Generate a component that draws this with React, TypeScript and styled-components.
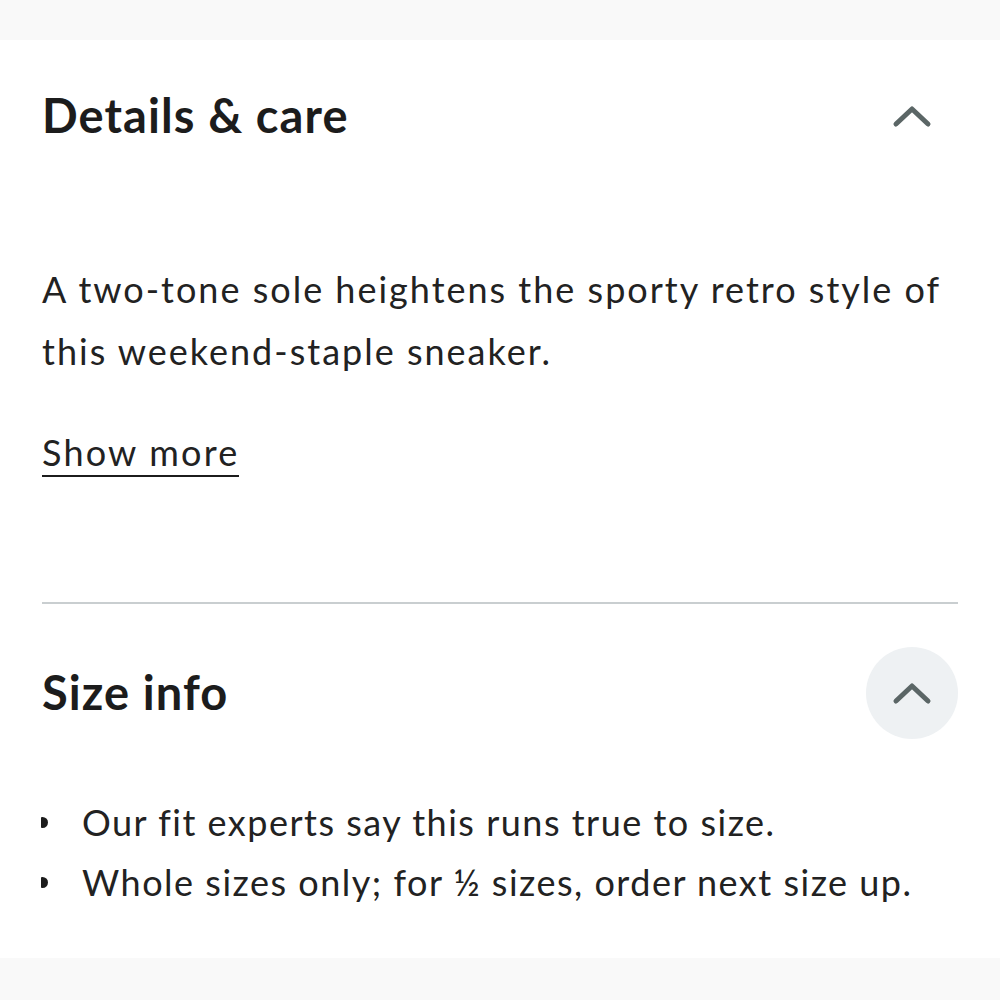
import React from "react";
import styled, { createGlobalStyle } from "styled-components";

const Global = createGlobalStyle`
  html, body { margin: 0; padding: 0; background: #ffffff; }
  body { font-family: Lato, "Noto Sans", sans-serif; color: #1f1f1f; }
`;

const Page = styled.div`
  width: 1000px;
  height: 1000px;
  display: flex;
  flex-direction: column;
  background: #ffffff;
  overflow: hidden;
`;

const Band = styled.div<{ $h: number }>`
  height: ${(p) => p.$h}px;
  background: #f9f9f9;
  flex-shrink: 0;
`;

const Content = styled.div`
  flex: 1;
  padding: 0 42px;
  display: flex;
  flex-direction: column;
`;

const Section = styled.section<{ $top: number; $bottom: number }>`
  padding-top: ${(p) => p.$top}px;
  padding-bottom: ${(p) => p.$bottom}px;
`;

const Header = styled.div`
  display: flex;
  align-items: center;
  justify-content: space-between;
  height: 92px;
`;

const Title = styled.h2`
  margin: 0 0 3px;
  font-size: 47px;
  font-weight: 700;
  letter-spacing: 1.1px;
  color: #1c1c1c;
`;

const Toggle = styled.button<{ $filled?: boolean }>`
  width: 92px;
  height: 92px;
  border-radius: 50%;
  border: none;
  padding: 0;
  display: flex;
  align-items: center;
  justify-content: center;
  background: ${(p) => (p.$filled ? "#eef1f3" : "transparent")};
`;

const Body = styled.p`
  margin: 96px 0 0;
  font-size: 36px;
  line-height: 62px;
  letter-spacing: 2px;
  color: #222;
`;

const ShowMore = styled.a`
  display: inline-block;
  margin-top: 47px;
  font-size: 36px;
  line-height: 46px;
  letter-spacing: 2.2px;
  color: #222;
  text-decoration: none;
  border-bottom: 2.5px solid #1c1c1c;
`;

const Divider = styled.hr`
  margin: 0;
  border: none;
  height: 2px;
  background: #c9ced0;
`;

const List = styled.ul`
  list-style: none;
  margin: 53px 0 0;
  padding: 0;
`;

const Item = styled.li`
  display: flex;
  align-items: center;
  gap: 34px;
  font-size: 36px;
  line-height: 60px;
  letter-spacing: 1.5px;
  color: #222;
`;

const Dot = styled.span`
  width: 7px;
  height: 11px;
  margin-left: -1px;
  background: #1c1c1c;
  border-radius: 1px 6px 6px 1px;
  flex-shrink: 0;
`;

const Chevron = () => (
  <svg width="40" height="24" viewBox="0 0 40 24">
    <path
      d="M4 20 L20 5 L36 20"
      fill="none"
      stroke="#5b6666"
      strokeWidth="5"
      strokeLinecap="round"
      strokeLinejoin="round"
    />
  </svg>
);

export default function App() {
  return (
    <Page>
      <Global />
      <Band $h={40} />
      <Content>
        <Section $top={30} $bottom={125}>
          <Header>
            <Title>Details &amp; care</Title>
            <Toggle aria-label="Collapse details">
              <Chevron />
            </Toggle>
          </Header>
          <Body>
            A two-tone sole heightens the sporty retro style of this weekend-staple sneaker.
          </Body>
          <ShowMore href="#">Show more</ShowMore>
        </Section>
        <Divider />
        <Section $top={43} $bottom={0}>
          <Header>
            <Title>Size info</Title>
            <Toggle $filled aria-label="Collapse size info">
              <Chevron />
            </Toggle>
          </Header>
          <List>
            <Item>
              <Dot />
              Our fit experts say this runs true to size.
            </Item>
            <Item>
              <Dot />
              Whole sizes only; for ½ sizes, order next size up.
            </Item>
          </List>
        </Section>
      </Content>
      <Band $h={42} />
    </Page>
  );
}
